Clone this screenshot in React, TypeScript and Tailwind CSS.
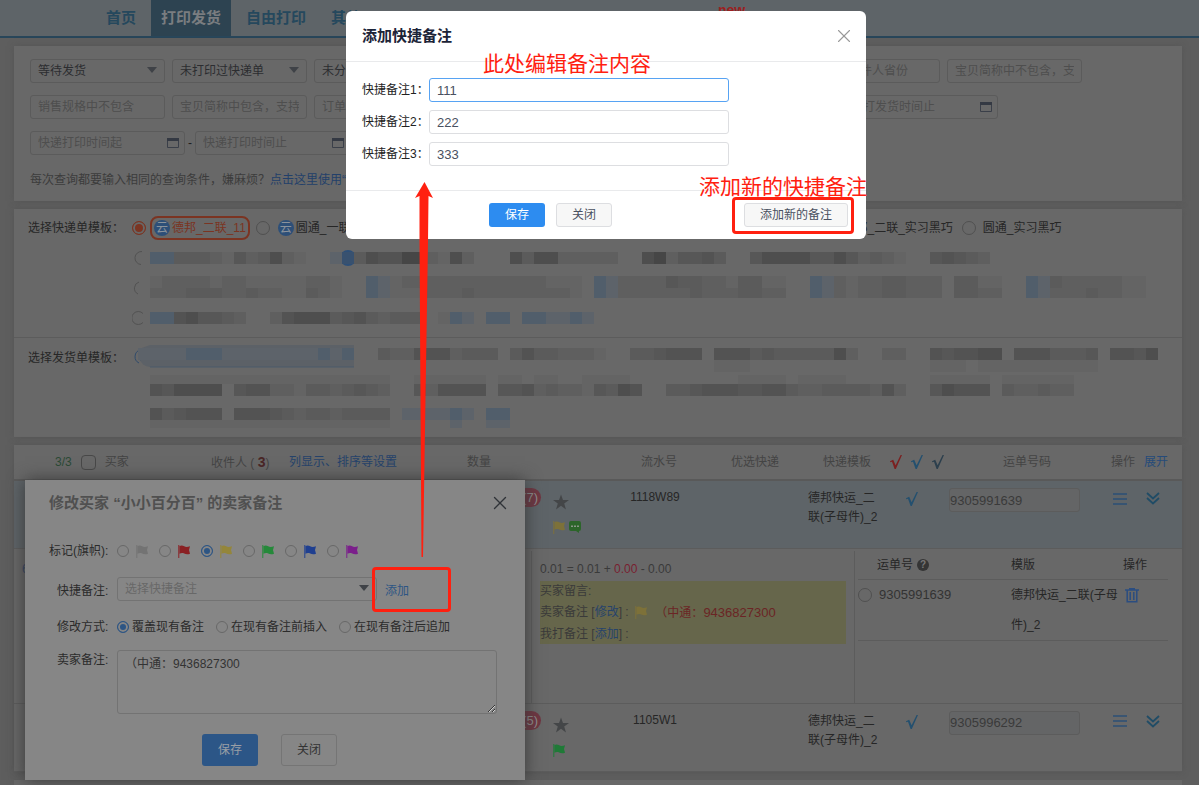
import type { ReactNode } from "react";
import { X } from "lucide-react";

type Order = {
    id: string;
    badge: string;
    flag: string;
    message: boolean;
    waybill: string;
    active: boolean;
}

const orders: Order[] = [
    { id: "1118W89", badge: "(7)", flag: "#7d7139", message: true, waybill: "9305991639", active: true },
    { id: "1105W1", badge: "(5)", flag: "#1f7a37", message: false, waybill: "9305996292", active: false },
];

const flags = [
    { name: "灰色", color: "#737373" },
    { name: "红色", color: "#8a2023" },
    { name: "黄色", color: "#94863a" },
    { name: "绿色", color: "#25893a" },
    { name: "蓝色", color: "#1f3f90" },
    { name: "紫色", color: "#7b1f8b" },
];

const modes = ["覆盖现有备注", "在现有备注前插入", "在现有备注后追加"];

const shades: Record<string, string> = {
    "0": "#464646",
    "1": "#4e4e4e",
    "2": "#535353",
    "3": "#575757",
    "4": "#5b5b5b",
    "5": "#5f5f5f",
    "6": "#646464",
    a: "#38516f",
    b: "#515e6b",
    c: "#5d636a",
};

type Strip = { y: number; h: number; runs: [number, string][] };

// a run starts at x, every character after that is one 12px cell
const expressStrips: Strip[] = [
    { y: 12, h: 12, runs: [[18, "bb44456"], [102, "354156"], [198, "ca41220056"], [318, "15"], [378, "141155555"], [510, "1053324"], [618, "3111133135456"], [798, "32345"]] },
    { y: 36, h: 12, runs: [[18, "6555565566666556"], [234, "bc6555555555555666"], [462, "bc5555344556"], [606, "4466"], [678, "bc565544555"], [822, "4466"], [894, "bc45555566"]] },
    { y: 48, h: 10, runs: [[18, "5554445545566456"], [234, "bc6665554555555556"], [462, "bc5555554555"], [606, "4455"], [678, "bc565544555"], [822, "4455"], [894, "bc55545566"]] },
    { y: 72, h: 12, runs: [[18, "bb213345"], [138, "5211143245444"], [306, "6bc"], [354, "bb"], [390, "bbccbc"]] },
];

const deliveryStrips: Strip[] = [
    { y: 10, h: 12, runs: [[6, "ccccbbbccccccccbcb"], [246, "4552225444"], [378, "42445556"], [498, "443222"], [582, "222434444415"], [750, "55"], [798, "232211"], [882, "2224443"], [978, "2231"]] },
    { y: 22, h: 12, runs: [[582, "666"], [798, "666.6666666666"]] },
    { y: 37, h: 9, runs: [[18, "66666666666666666666"], [282, "666666.66.66"], [450, "6666"], [606, "6666.6666"], [798, "66666"], [870, "666666"]] },
    { y: 46, h: 12, runs: [[18, "231111"], [102, "3225564454345"], [282, "352222"], [366, "332545563412"], [534, "44322233224554444525"], [798, "31222"], [870, "455455"]] },
    { y: 70, h: 12, runs: [[18, "243222"], [102, "2223454454444"], [270, "ccccbc"], [354, "bb"]] },
    { y: 82, h: 8, runs: [[18, "66666666666666666666"], [318, "c"], [354, "cc"]] },
];

function Mosaic({ strips, height, children }: { strips: Strip[]; height: number; children?: ReactNode }) {
    return (
        <svg width={1040} height={height} viewBox={`0 0 1040 ${height}`} className="block shrink-0" aria-hidden="true">
            {children}
            {strips.map((strip) =>
                strip.runs.map(([x, cells]) =>
                    cells.split("").map((cell, i) =>
                        cell === "." ? null : (
                            <rect key={`${strip.y}-${x}-${i}`} x={x + i * 12} y={strip.y} width={12} height={strip.h} fill={shades[cell]} shapeRendering="crispEdges" />
                        )
                    )
                )
            )}
        </svg>
    )
}

function Flag({ color }: { color: string }) {
    return (
        <svg width={12} height={13} viewBox="0 0 12 13" className="block" aria-hidden="true">
            <path d="M0 0h1.4v13H0z" fill={color} opacity={0.7} />
            <path d="M1.4 1C3 .2 4.600 .2 6.200 1.200S9.600 2 12 1.200L11 5l1 3.800C9.600 9.600 8 9.400 6.200 8.600S3 8 1.400 8.800z" fill={color} />
        </svg>
    )
}

function Cloud() {
    return (
        <span className="flex size-4 items-center justify-center rounded-full bg-[#2d4f78] text-xs leading-4 text-[#8a929b]">云</span>
    )
}

function Tick({ color }: { color: string }) {
    return (
        <svg width={12} height={14} viewBox="0 0 12 14" className="block shrink-0" aria-hidden="true">
            <path d="M0 6.200 3.200 4.800 5.600 10.200 10.600 0H12L5.800 14H4.600L2 6.800.3 7.200z" fill={color} />
        </svg>
    )
}

function MenuIcon() {
    return (
        <svg width={14} height={12} viewBox="0 0 14 12" className="block" aria-hidden="true">
            <path d="M0 1h14M0 6h14M0 11h14" stroke="#2b4f75" strokeWidth={1.500} />
        </svg>
    )
}

function ChevronsIcon() {
    return (
        <svg width={14} height={13} viewBox="0 0 14 13" className="block" aria-hidden="true">
            <path d="m1 1 6 5.500L13 1M1 6l6 5.500L13 6" fill="none" stroke="#204c66" strokeWidth={1.800} />
        </svg>
    )
}

function TrashIcon() {
    return (
        <svg width={14} height={15} viewBox="0 0 14 15" className="block" aria-hidden="true">
            <path d="M0 2h14M4 .7h6M2.200 2v11.800h9.600V2M5.200 4v8M8.800 4v8" fill="none" stroke="#2b4d80" strokeWidth={1.500} />
        </svg>
    )
}

function Triangle() {
    return (
        <svg width={10} height={6} viewBox="0 0 10 6" className="pointer-events-none absolute right-2 top-2" aria-hidden="true">
            <path d="M0 0h10L5 6z" fill="#3f4247" />
        </svg>
    )
}

function FilterSelect({ value, className = "w-[135px]" }: { value: string; className?: string }) {
    return (
        <div className={`relative shrink-0 ${className}`}>
            <select aria-label={value} className="block h-6 w-full appearance-none rounded-[3px] border border-[#5b5b5b] pl-[7px] text-xs leading-5 text-[#2c2d30]">
                <option>{value}</option>
            </select>
            <Triangle />
        </div>
    )
}

function FilterInput({ placeholder, className = "w-[135px]" }: { placeholder: string; className?: string }) {
    return (
        <input type="text" aria-label={placeholder} placeholder={placeholder} className={`block h-6 shrink-0 rounded-[3px] border border-[#5b5b5b] px-[7px] text-xs placeholder:text-[#4e4e4e] ${className}`} />
    )
}

function DateInput({ placeholder }: { placeholder: string }) {
    return (
        <div className="relative w-[155px] shrink-0">
            <FilterInput placeholder={placeholder} className="w-full" />
            <svg width={12} height={11} viewBox="0 0 12 11" className="absolute right-[6px] top-[6px]" aria-hidden="true">
                <path d="M.5 1.500h11v9H.5z" fill="none" stroke="#3a3f49" />
                <path d="M0 1h12v3H0z" fill="#343943" />
            </svg>
        </div>
    )
}

const grayRadio = "size-[14px] shrink-0 appearance-none rounded-full border border-[#505050]";
const modalRadio = "size-3 shrink-0 appearance-none rounded-full border border-[#686868] checked:border-[#2d5584] checked:bg-[#2d5584] checked:shadow-[inset_0_0_0_2px_#868686]";

function Filters() {
    return (
        <section className="flex h-[155px] flex-col gap-3 overflow-hidden bg-[#686868] px-4 pt-[13px] shadow-[0_0_6px_#555]">
            <div className="flex gap-[7px]">
                <FilterSelect value="等待发货" />
                <FilterSelect value="未打印过快递单" />
                <FilterSelect value="未分类" />
                <FilterSelect value="全部店铺" className="w-[377px]" />
                <FilterInput placeholder="收件人省份" className="w-[100px]" />
                <FilterInput placeholder="宝贝简称中不包含，支持" />
            </div>
            <div className="flex gap-[7px]">
                <FilterInput placeholder="销售规格中不包含" />
                <FilterInput placeholder="宝贝简称中包含，支持" />
                <FilterInput placeholder="订单编号" />
                <FilterInput placeholder="商品编码" className="w-[380px]" />
                <DateInput placeholder="我打发货时间止" />
            </div>
            <div className="flex">
                <DateInput placeholder="快递打印时间起" />
                <span className="w-[10px] text-center text-xs leading-6 text-[#1e1e1e]">-</span>
                <DateInput placeholder="快递打印时间止" />
            </div>
            <p className="pt-[3px] text-xs leading-5 text-[#3c3c3c]">
                每次查询都要输入相同的查询条件，嫌麻烦？<a href="#" className="text-[#23406a]">点击这里使用“常用查询”</a>
            </p>
        </section>
    )
}

function Templates() {
    return (
        <section className="overflow-hidden bg-[#686868] text-xs text-[#262626] shadow-[0_0_6px_#555]">
            <div className="flex h-[129px] border-b border-[#5c5c5c] pl-[14px] pt-[7px]">
                <div className="w-[104px] shrink-0 leading-6">选择快递单模板：</div>
                <div className="min-w-0 flex-1 overflow-hidden">
                    <div className="flex h-6 items-center whitespace-nowrap">
                        <label className="flex shrink-0 items-center gap-1">
                            <input type="radio" name="express" defaultChecked className="size-[14px] shrink-0 appearance-none rounded-full border border-[#7b3422] bg-[#7b3422] shadow-[inset_0_0_0_2px_#686868]" />
                            <span className="flex h-6 items-center gap-[2px] rounded-lg border-2 border-[#7b3422] px-[2px] text-[#7b3422]">
                                <Cloud />德邦_二联_11
                            </span>
                        </label>
                        <label className="ml-[6px] flex w-[566px] shrink-0 items-center">
                            <input type="radio" name="express" className={grayRadio} />
                            <span className="ml-2 mr-[2px]"><Cloud /></span>圆通_一联_实习
                        </label>
                        <label className="flex shrink-0 items-center gap-2">
                            <span className="w-[131px] text-right">德邦_二联_实习黑巧</span>
                        </label>
                        <label className="ml-[9px] flex shrink-0 items-center gap-[7px]">
                            <input type="radio" name="express" className={grayRadio} />
                            圆通_实习黑巧
                        </label>
                    </div>
                    <Mosaic strips={expressStrips} height={97}>
                        <g fill="none" stroke="#525252">
                            <path d="M10 11.500a6.500 6.500 0 0 0-1 13" />
                            <path d="M7 42a6.500 6.500 0 0 0-1 12" />
                            <path d="M11 73.500a6.500 6.500 0 1 0 0 9" />
                        </g>
                        <circle cx={216} cy={18} r={8} fill="#2d4f78" />
                    </Mosaic>
                </div>
            </div>
            <div className="flex h-[99px] pl-[14px]">
                <div className="w-[104px] shrink-0 pt-2 leading-6">选择发货单模板：</div>
                <div className="min-w-0 flex-1 overflow-hidden">
                    <Mosaic strips={deliveryStrips} height={99}>
                        <path d="M8 12a7 7 0 0 0-1 13M10 14a5 5 0 0 0-1 9" fill="none" stroke="#2f4b6c" />
                        <path d="M18 7h204v22H18a12 12 0 0 1-11-9v-9z" fill="#5c6167" />
                        <path d="M18 29h204" stroke="#4b5a6b" />
                    </Mosaic>
                </div>
            </div>
        </section>
    )
}

function Detail() {
    return (
        <div className="flex h-[154px] pt-[2px] text-xs text-[#3a3a3a]">
            <div className="min-w-0 flex-1 border-r border-[#5c5c5c] pl-2 pt-2 leading-5 text-[#2b3f66]">6</div>
            <div className="w-[323px] shrink-0 border-r border-[#5c5c5c] px-2 pt-2">
                <p className="h-[22px] leading-5">0.01 = 0.01 + <span className="text-[#781f30]">0.00</span> - 0.00</p>
                <div className="h-[63px] bg-[#66664b] leading-[21px]">
                    <p>买家留言:</p>
                    <p className="flex items-center whitespace-pre">
                        卖家备注 [<a href="#" className="text-[#26436b]">修改</a>] :  <Flag color="#7d7139" />
                        <span className="pl-2 text-[#6b2525]">（中通：<span className="text-[13px]">9436827300</span></span>
                    </p>
                    <p>我打备注 [<a href="#" className="text-[#26436b]">添加</a>] :</p>
                </div>
            </div>
            <div className="w-[327px] shrink-0 pl-[3px] pr-[14px]">
                <table className="w-full table-fixed text-left text-[#262626]">
                    <colgroup>
                        <col className="w-[153px]" />
                        <col className="w-[112px]" />
                        <col />
                    </colgroup>
                    <thead>
                        <tr className="h-[29px] border-b border-[#5c5c5c]">
                            <th className="pl-[19px] font-normal">
                                <span className="flex items-center gap-1">
                                    运单号
                                    <span className="flex size-3 items-center justify-center rounded-full bg-[#353535] text-[10px] font-bold leading-3 text-[#777]">?</span>
                                </span>
                            </th>
                            <th className="font-normal">模版</th>
                            <th className="font-normal">操作</th>
                        </tr>
                    </thead>
                    <tbody>
                        <tr className="border-b border-[#5c5c5c] align-top leading-[30px]">
                            <td>
                                <label className="flex items-center gap-[7px] text-[13px] text-[#333]">
                                    <input type="radio" name="waybill" className={grayRadio} />9305991639
                                </label>
                            </td>
                            <td>德邦快运_二联(子母件)_2</td>
                            <td className="pl-[2px] pt-2">
                                <button aria-label="删除" className="block"><TrashIcon /></button>
                            </td>
                        </tr>
                    </tbody>
                </table>
            </div>
        </div>
    )
}

function OrderRow({ order }: { order: Order }) {
    return (
        <tr className={`h-[68px] border-b border-[#5c5c5c] align-top ${order.active ? "bg-[#5e6468]" : ""}`}>
            <td />
            <td />
            <td className="pt-[7px]">
                <div className="flex gap-3">
                    <span className="h-[19px] w-[81px] rounded-full bg-[#6f3642] pr-[3px] text-right text-[13px] leading-[19px] text-[#8f8f8f]">{order.badge}</span>
                    <div className="pt-[6px]">
                        <svg width={16} height={16} viewBox="0 0 18 17" className="block" aria-hidden="true">
                            <path d="M9 0l2.200 6.200H18l-5.400 4 2 6.600L9 12.800l-5.600 4 2-6.600L0 6.200h6.800z" fill="#444648" />
                        </svg>
                        <div className="mt-[11px] flex gap-1">
                            <Flag color={order.flag} />
                            {order.message && (
                                <svg width={12} height={12} viewBox="0 0 12 12" aria-hidden="true">
                                    <path d="M2 0h8a2 2 0 0 1 2 2v6a2 2 0 0 1-2 2v2L7 10H2a2 2 0 0 1-2-2V2a2 2 0 0 1 2-2z" fill="#2c652a" />
                                    <path d="M2 4.500h2v1.500H2zM5 4.500h2v1.500H5zM8 4.500h2v1.500H8z" fill="#8a9688" />
                                </svg>
                            )}
                        </div>
                    </div>
                </div>
            </td>
            <td className="pr-[30px] pt-[7px] text-center leading-[19px]">{order.id}</td>
            <td />
            <td className="pt-2">
                <div className="flex gap-[22px]">
                    <span className="w-[84px] shrink-0 pl-2 leading-[19px]">德邦快运_二联(子母件)_2</span>
                    <span className="pt-[3px]"><Tick color="#24506f" /></span>
                </div>
            </td>
            <td className="pl-1 pt-[7px]">
                <input type="text" aria-label="运单号码" defaultValue={order.waybill} className="block h-6 w-[131px] rounded-[3px] border border-[#5c5c5c] bg-[#646566] text-[13px] text-[#3a3a3a]" />
            </td>
            <td className="pt-[11px]">
                <div className="flex gap-[19px] pl-[22px]">
                    <button aria-label="菜单"><MenuIcon /></button>
                    <button aria-label="展开"><ChevronsIcon /></button>
                </div>
            </td>
        </tr>
    )
}

function Orders() {
    return (
        <section className="bg-[#686868] text-xs text-[#262626] shadow-[0_0_6px_#555]">
            <table className="w-full table-fixed text-left">
                <colgroup>
                    <col className="w-[190px]" />
                    <col />
                    <col className="w-[160px]" />
                    <col className="w-[100px]" />
                    <col className="w-[80px]" />
                    <col className="w-[145px]" />
                    <col className="w-[146px]" />
                    <col className="w-[91px]" />
                </colgroup>
                <thead>
                    <tr className="h-[35px] border-b-2 border-[#595959] text-[#444] [&>th]:font-normal">
                        <th>
                            <label className="flex items-center gap-[9px] pl-[41px]">
                                <span className="text-[#2b4a35]">3/3</span>
                                <input type="checkbox" className="size-[15px] appearance-none rounded-sm border border-[#484848]" />
                                买家
                            </label>
                        </th>
                        <th>
                            <div className="flex items-center pl-[7px]">
                                <span className="w-[78px]">收件人 ( <b className="text-sm text-[#4a2626]">3</b>)</span>
                                <a href="#" className="text-[#26436b]">列显示、排序等设置</a>
                            </div>
                        </th>
                        <th><span className="pl-[7px]">数量</span></th>
                        <th><span className="pl-[21px]">流水号</span></th>
                        <th><span className="pl-[11px]">优选快递</span></th>
                        <th>
                            <div className="flex items-center gap-[9px] whitespace-nowrap pl-[23px]">
                                <span className="pr-[10px]">快递模板</span>
                                <Tick color="#7b2020" /><Tick color="#24506f" /><Tick color="#2c3f4d" />
                            </div>
                        </th>
                        <th><span className="pl-[58px]">运单号码</span></th>
                        <th>
                            <div className="flex gap-[9px] pl-5">操作 <a href="#" className="text-[#264b7a]">展开</a></div>
                        </th>
                    </tr>
                </thead>
                <tbody>
                    <OrderRow order={orders[0]} />
                    <tr className="border-b border-[#5c5c5c]"><td colSpan={8}><Detail /></td></tr>
                    <OrderRow order={orders[1]} />
                </tbody>
            </table>
        </section>
    )
}

function EditRemark() {
    return (
        <div role="dialog" aria-label="修改卖家备注" className="absolute left-[25px] top-[480px] h-[300px] w-[500px] bg-[#868686] text-xs text-[#2b2b2b] shadow-[0_0_16px_#383838]">
            <div className="flex items-center justify-between pl-6 pr-[14px] pt-[11px]">
                <h2 className="text-[15px] font-bold leading-6 text-[#505050]">修改买家 “小小百分百” 的卖家备注</h2>
                <button aria-label="关闭"><X size={22} color="#303338" strokeWidth={1.500} /></button>
            </div>
            <div className="mt-7 flex h-4 items-center pl-6">
                <span className="w-[68px] whitespace-nowrap">标记(旗帜):</span>
                <div className="flex gap-[11px]">
                    {flags.map((flag) => (
                        <label key={flag.name} aria-label={flag.name} className="flex items-center gap-[7px]">
                            <input type="radio" name="flag" defaultChecked={flag.name === "黄色"} className={modalRadio} />
                            <Flag color={flag.color} />
                        </label>
                    ))}
                </div>
            </div>
            <div className="mt-[18px] flex h-6 items-center pl-8">
                <label htmlFor="quick" className="w-[60px] pt-1">快捷备注:</label>
                <div className="relative w-[260px]">
                    <select id="quick" className="block h-6 w-full appearance-none rounded-[3px] border border-[#737373] pl-[7px] text-xs text-[#686868]">
                        <option>选择快捷备注</option>
                    </select>
                    <Triangle />
                </div>
                <a href="#" className="pl-2 pt-1 text-[#2d5584]">添加</a>
            </div>
            <div className="mt-4 flex h-5 items-center pl-8">
                <span className="w-[60px]">修改方式:</span>
                <div className="flex gap-3">
                    {modes.map((mode, i) => (
                        <label key={mode} className="flex items-center gap-[3px]">
                            <input type="radio" name="mode" defaultChecked={i === 0} className={modalRadio} />
                            {mode}
                        </label>
                    ))}
                </div>
            </div>
            <div className="mt-[13px] flex pl-8">
                <label htmlFor="remark" className="w-[60px] leading-5">卖家备注:</label>
                <textarea id="remark" defaultValue="（中通：9436827300" className="h-16 w-[380px] rounded-[3px] border border-[#737373] px-[7px] py-1 text-xs leading-[18px] text-[#333]" />
            </div>
            <div className="mt-5 flex gap-[23px] pl-[177px]">
                <button className="h-8 w-14 rounded-[3px] bg-[#2c5687] text-[#9a9fa5]">保存</button>
                <button className="h-8 w-14 rounded-[3px] border border-[#757575] text-[#333]">关闭</button>
            </div>
        </div>
    )
}

function AddRemark() {
    return (
        <div role="dialog" aria-label="添加快捷备注" className="absolute left-[346px] top-[11px] w-[520px] rounded-md bg-white text-xs text-[#222]">
            <div className="flex h-[51px] items-center justify-between border-b border-[#e9eaec] pl-4 pr-[11px]">
                <h2 className="text-[15px] font-bold text-[#1c2438]">添加快捷备注</h2>
                <button aria-label="关闭"><X size={22} color="#999" strokeWidth={1.200} /></button>
            </div>
            <div className="flex h-[128px] flex-col gap-2 px-4 pt-4">
                {["111", "222", "333"].map((value, i) => (
                    <label key={value} className="flex h-6 items-center">
                        <span className="w-[67px] whitespace-nowrap">快捷备注{i + 1}：</span>
                        <input type="text" defaultValue={value} className={`h-6 w-[300px] rounded-[3px] border px-[7px] text-[13px] text-[#495060] ${i === 0 ? "border-[#57a3f3]" : "border-[#dddee1]"}`} />
                    </label>
                ))}
            </div>
            <div className="flex h-[49px] items-center border-t border-[#e9eaec] pl-[143px] pr-[18px]">
                <button className="h-6 w-14 rounded-[3px] bg-[#2d8cf0] text-white">保存</button>
                <button className="ml-[11px] h-6 w-14 rounded-[3px] border border-[#dddee1] bg-[#f7f7f7] text-[#495060]">关闭</button>
                <button className="ml-auto h-6 w-[104px] rounded-[3px] border border-[#dddee1] bg-[#f7f7f7] text-[#495060]">添加新的备注</button>
            </div>
        </div>
    )
}

function Notes() {
    return (
        <div className="pointer-events-none absolute inset-0 text-[21px] leading-6 text-[#ff2010]">
            <span className="absolute left-[483px] top-[52px] whitespace-nowrap">此处编辑备注内容</span>
            <span className="absolute left-[699px] top-[175px] whitespace-nowrap">添加新的快捷备注</span>
            <div className="absolute left-[732px] top-[197px] h-[37px] w-[122px] rounded-sm border-3 border-[#ff2010]" />
            <div className="absolute left-[372px] top-[567px] h-[45px] w-[79px] rounded-sm border-3 border-[#ff2010]" />
            <svg width={20} height={376} viewBox="0 0 20 376" className="absolute left-[414px] top-[182px]" aria-hidden="true">
                <path d="M10.500 0 19 16l-4.500-2L14 60 9 375H7.500L5.500 60V14L1 16z" fill="#ff2010" />
            </svg>
        </div>
    )
}

export default function App() {
    return (
        <div className="relative h-screen min-h-[785px] overflow-hidden bg-[#5e5e5e] font-['Liberation_Sans','Noto_Sans_CJK_SC',sans-serif]">
            <header className="h-[38px] border-b-2 border-[#28465a] bg-[#5e6468] pl-[91px]">
                <nav className="flex text-[15px] font-bold leading-9 text-[#25485d]">
                    <a href="#" className="w-[60px] text-center">首页</a>
                    <a href="#" className="h-9 w-20 bg-[#2d4351] text-center text-[#7a7d80]">打印发货</a>
                    <a href="#" className="w-[90px] text-center">自由打印</a>
                    <a href="#" className="w-[90px] pl-[10px]">其他</a>
                    <span className="ml-[307px] text-sm leading-5 text-[#9c2020]">new</span>
                </nav>
            </header>
            <main className="flex flex-col gap-2 pb-2 pl-[14px] pr-[17px] pt-2">
                <Filters />
                <Templates />
                <Orders />
                <section className="h-8 bg-[#686868]" />
            </main>
            <EditRemark />
            <AddRemark />
            <Notes />
        </div>
    )
}
